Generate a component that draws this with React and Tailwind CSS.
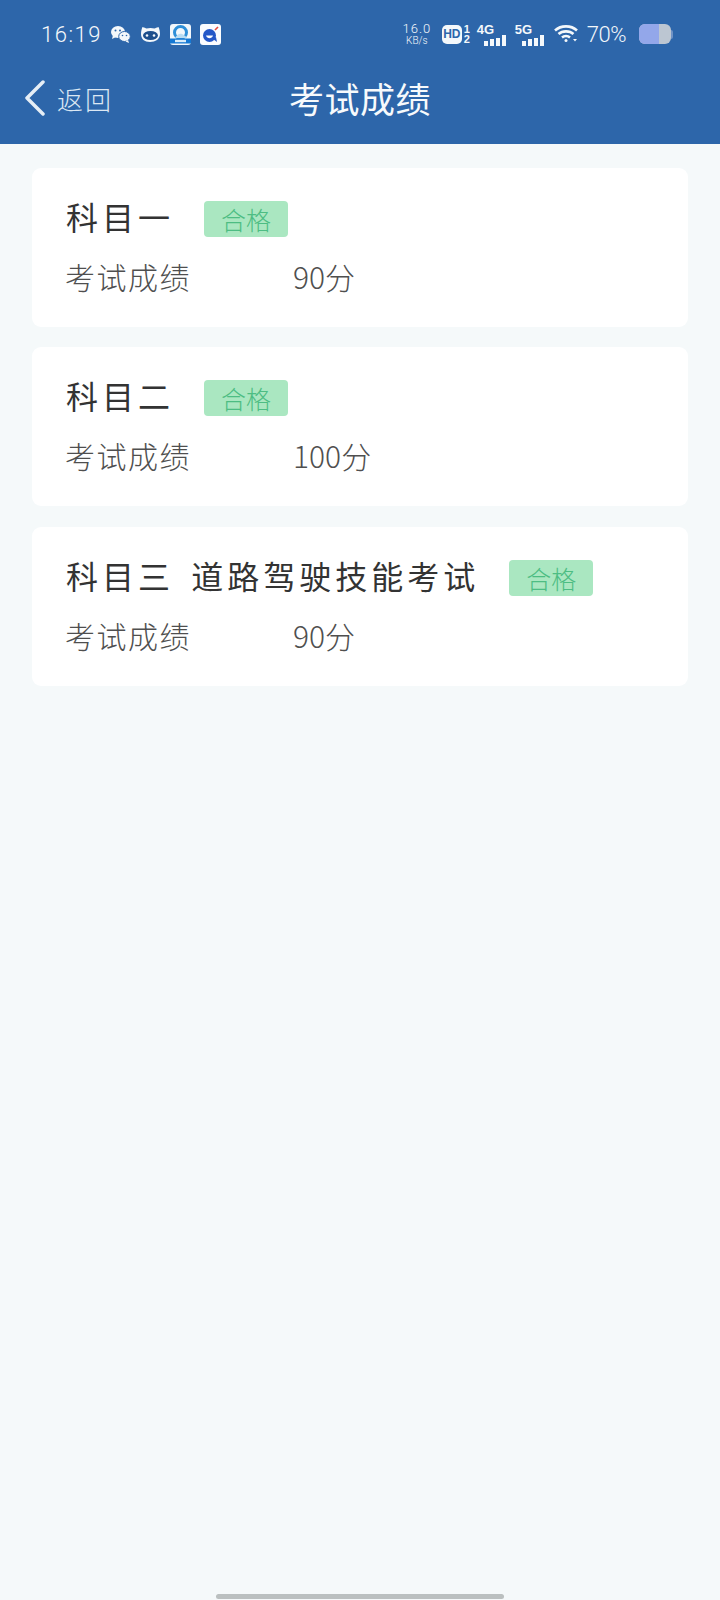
const font = { fontFamily: '"Noto Sans CJK SC", sans-serif' };

const results = [
  { title: '科目一', score: '90分' },
  { title: '科目二', score: '100分' },
  { title: '科目三 道路驾驶技能考试', score: '90分' },
];

function WeChat() {
  return (
    <svg width="21" height="20" viewBox="0 0 21 20" fill="#f4f8fb">
      <ellipse cx="8" cy="8" rx="7" ry="6" />
      <path d="M3 11l-1 4 4-2z" />
      <ellipse cx="14.5" cy="12.5" rx="5.8" ry="5" stroke="#2d66aa" strokeWidth="1" />
      <path d="M18 16l1 3-3.500-1.500z" />
      <circle cx="5.500" cy="6.500" r="1" fill="#2d66aa" />
      <circle cx="10" cy="6.500" r="1" fill="#2d66aa" />
      <circle cx="12.500" cy="11.500" r="0.800" fill="#2d66aa" />
      <circle cx="16.500" cy="11.500" r="0.800" fill="#2d66aa" />
    </svg>
  );
}

function CatIcon() {
  return (
    <svg width="21" height="18" viewBox="0 0 21 18">
      <path d="M1 9c0-3 1-6 1.500-7 2 .5 3 1 4 1.500 2.500-.8 5.500-.8 8 0 1-.5 2-1 4-1.500.5 1 1.500 4 1.500 7 0 5-4.500 8-10 8S1 14 1 9z" fill="#f4f8fb" />
      <ellipse cx="10.500" cy="10.500" rx="7.500" ry="4.500" fill="#1d4f8c" />
      <circle cx="7" cy="10.500" r="1.300" fill="#f4f8fb" />
      <circle cx="14" cy="10.500" r="1.300" fill="#f4f8fb" />
    </svg>
  );
}

function BrowserIcon() {
  return (
    <svg width="21" height="21" viewBox="0 0 21 21">
      <rect width="21" height="21" rx="3" fill="#f2f7fb" />
      <circle cx="10.500" cy="8.500" r="6" fill="none" stroke="#2e8fd8" strokeWidth="3" />
      <path d="M5 14c2-4 5-5 7-4s4 2 5 4z" fill="#b9dcf3" />
      <rect y="14.500" width="21" height="5" fill="#1478d4" />
      <rect x="5" y="15.800" width="11" height="2.400" fill="#d8ecfb" />
    </svg>
  );
}

function ChatIcon() {
  return (
    <svg width="21" height="21" viewBox="0 0 21 21">
      <rect width="21" height="21" rx="3" fill="#fbfdff" />
      <circle cx="9.500" cy="11.500" r="6.500" fill="#2458c8" />
      <path d="M13 15l4 3-1-5z" fill="#2458c8" />
      <path d="M6 11.500c1 3.500 6 3.500 7 0z" fill="#fbfdff" />
      <path d="M15 6l3-3" stroke="#e5483d" strokeWidth="1.600" />
    </svg>
  );
}

function Bars({ label }) {
  return (
    <div className="relative w-[29px] h-[25px]">
      <span className="absolute left-0 top-0 text-[13px] leading-[16px] font-bold text-[#f4f8fb] font-['Liberation_Sans',sans-serif]">{label}</span>
      <div className="absolute right-0 bottom-[1px] flex items-end gap-[2px]">
        <div className="w-[4px] h-[5px] bg-[#f4f8fb]" />
        <div className="w-[4px] h-[7px] bg-[#f4f8fb]" />
        <div className="w-[4px] h-[8px] bg-[#f4f8fb]" />
        <div className="w-[4px] h-[11px] bg-[#f4f8fb]" />
      </div>
    </div>
  );
}

function Wifi() {
  return (
    <svg width="24" height="20" viewBox="0 0 24 20" fill="none" stroke="#f4f8fb" strokeWidth="2.600">
      <path d="M1 6.500c6-5.500 16-5.500 22 0" />
      <path d="M4.500 10c4-3.500 11-3.500 15 0" />
      <path d="M8 13.500c2.200-1.800 5.800-1.800 8 0" />
      <circle cx="12" cy="16.500" r="1.500" fill="#f4f8fb" stroke="none" />
      <path d="M19 15h4l-2 2.500z" fill="#f4f8fb" stroke="none" />
    </svg>
  );
}

function StatusBar() {
  return (
    <div className="h-[53px] pt-[21px] pl-[41px] pr-[47px] flex items-start justify-between text-[#f4f8fb]">
      <div className="flex items-center h-[26px]">
        <span className="text-[22px] tracking-[1.500px] w-[69px] font-['Roboto',sans-serif] font-light">16:19</span>
        <div className="flex items-center gap-[9px]">
          <WeChat />
          <CatIcon />
          <BrowserIcon />
          <ChatIcon />
        </div>
      </div>
      <div className="flex items-center h-[26px]">
        <div className="w-[32px] flex flex-col items-center mr-[9px] font-['Roboto',sans-serif] font-light">
          <span className="text-[13px] leading-[12px] tracking-[1px]">16.0</span>
          <span className="text-[10px] leading-[11px]">KB/s</span>
        </div>
        <div className="w-[20px] h-[19px] bg-[#f4f8fb] rounded-[5px] text-[#2d66aa] text-[12px] font-bold leading-[19px] text-center font-['Liberation_Sans',sans-serif]">HD</div>
        <div className="w-[8px] ml-[1px] mr-[6px] flex flex-col items-center text-[11px] leading-[10px] font-bold font-['Liberation_Sans',sans-serif]">
          <span>1</span>
          <span>2</span>
        </div>
        <Bars label="4G" />
        <div className="w-[9px]" />
        <Bars label="5G" />
        <div className="w-[10px]" />
        <Wifi />
        <span className="ml-[9px] text-[22px] font-light font-['Roboto',sans-serif] tracking-[-0.5px]">70%</span>
        <div className="ml-[13px] w-[32px] h-[20px] rounded-[6px] bg-[#bcc6d2] overflow-hidden">
          <div className="w-[20px] h-full bg-[#93a7ea]" />
        </div>
        <div className="w-[2px] h-[9px] bg-[#6f93c6] rounded-r" />
      </div>
    </div>
  );
}

function Card({ title, score }) {
  return (
    <div className="h-[159px] bg-white rounded-[9px] pl-[34px] pt-[24px]">
      <div className="flex items-center h-[48px]">
        <span className="text-[32px] leading-[48px] tracking-[4px] [word-spacing:6px] text-[#333333] mr-[30px] whitespace-pre">{title}</span>
        <span className="mt-[6px] w-[84px] h-[36px] rounded-[4px] bg-[#aae7c1] text-[#4dbd83] text-[25px] leading-[36px] text-center font-light">合格</span>
      </div>
      <div className="flex items-center h-[46px] mt-[13px] text-[30px] leading-[46px] text-[#4f4f4f] font-light">
        <span className="w-[227px] tracking-[1.500px] -ml-[1px] mr-[1px]">考试成绩</span>
        <span>{score}</span>
      </div>
    </div>
  );
}

export default function App() {
  return (
    <div className="relative w-[720px] h-[1600px] bg-[#f5f9fa] overflow-hidden" style={font}>
      <div className="h-[144px] bg-[#2d66aa]">
        <StatusBar />
        <div className="relative h-[90px] flex items-center justify-center">
          <div className="absolute left-[24px] inset-y-0 flex items-center text-[#dce8f4]">
            <svg width="22" height="36" viewBox="0 0 22 36" fill="none" stroke="#e6eef6" strokeWidth="3.500" strokeLinecap="round" strokeLinejoin="round">
              <path d="M19 2L3 18l16 16" />
            </svg>
            <span className="ml-[11px] text-[26px] tracking-[2px] font-light">返回</span>
          </div>
          <span className="text-[35px] text-[#f7fafc] tracking-[0.500px]">考试成绩</span>
        </div>
      </div>
      <div className="flex flex-col gap-[20.250px] pt-[24px] pl-[32px] pr-[32px]">
        {results.map(r => (
          <Card key={r.title} title={r.title} score={r.score} />
        ))}
      </div>
      <div className="absolute left-[216px] bottom-[1px] w-[288px] h-[5px] rounded-full bg-[#bbc0c0]" />
    </div>
  );
}
